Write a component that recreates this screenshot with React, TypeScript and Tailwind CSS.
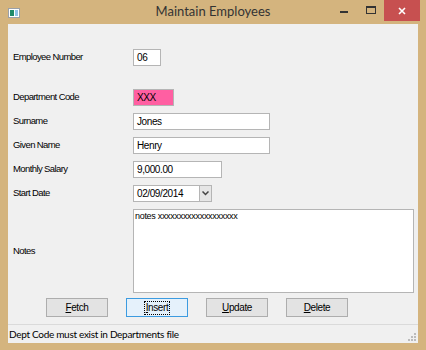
import React from 'react';

const label = 'w-[120px] shrink-0 text-[9.5px] tracking-[-0.6px] text-black';
const box = 'h-[17px] border border-[#b5b5b5] px-[3px] text-[10px] tracking-[-0.4px] leading-[15px] text-black';

function Row({ name, children, className = '' }: { name: string; children: React.ReactNode; className?: string }) {
  return (
    <div className={`flex items-center ${className}`}>
      <span className={label}>{name}</span>
      {children}
    </div>
  );
}

function Btn({ text, first, focused }: { text: string; first: string; focused?: boolean }) {
  return (
    <div
      className={`flex h-[19px] w-[62px] items-center justify-center border text-[10px] tracking-[-0.4px] text-black ${
        focused ? 'border-[#3c9be0] bg-[#e5f1fb]' : 'border-[#adadad] bg-[#e3e3e3]'
      }`}
    >
      <span className={focused ? 'outline outline-1 outline-dotted outline-black px-[1px] leading-[12px]' : ''}>
        <span className="underline">{first}</span>
        {text}
      </span>
    </div>
  );
}

export default function App() {
  return (
    <div className="flex h-[350px] w-[426px] flex-col bg-[#d4b47e] font-['Liberation_Sans',sans-serif]">
      {/* title bar */}
      <div className="relative flex h-[24px] shrink-0 items-center justify-center">
        <div className="absolute left-[8px] top-[8px] flex h-[10px] w-[12px] items-center border border-[#9aa0a8] bg-white px-[1px]">
          <div className="h-[6px] w-[5px] bg-[#1f8a6a]" />
          <div className="ml-[1px] h-[6px] w-[3px] bg-[#8fc3e8]" />
        </div>
        <span className="font-['Lato',sans-serif] text-[13px] text-[#333]">Maintain Employees</span>
        <div className="absolute right-[6px] top-0 flex h-[21px] items-start">
          <div className="flex h-[21px] w-[26px] items-center justify-center">
            <div className="mt-[3px] h-[2px] w-[8px] bg-[#333]" />
          </div>
          <div className="flex h-[21px] w-[27px] items-center justify-center">
            <div className="mb-[2px] h-[8px] w-[10px] border border-t-2 border-[#333]" />
          </div>
          <div className="flex h-[21px] w-[36px] items-center justify-center bg-[#c75050]">
            <svg width="8" height="8" viewBox="0 0 8 8">
              <path d="M1 1L7 7M7 1L1 7" stroke="white" strokeWidth="1.6" />
            </svg>
          </div>
        </div>
      </div>

      {/* client area */}
      <div className="mx-[8px] flex flex-1 flex-col bg-[#f0f0f0] pl-[5px]">
        <Row name="Employee Number" className="mt-[25px]">
          <div className={`${box} w-[28px] bg-white`}>06</div>
        </Row>
        <Row name="Department Code" className="mt-[23px]">
          <div className={`${box} w-[41px] bg-[#ff5fa2]`}>XXX</div>
        </Row>
        <Row name="Surname" className="mt-[7px]">
          <div className={`${box} w-[137px] bg-white`}>Jones</div>
        </Row>
        <Row name="Given Name" className="mt-[7px]">
          <div className={`${box} w-[137px] bg-white`}>Henry</div>
        </Row>
        <Row name="Monthly Salary" className="mt-[7px]">
          <div className={`${box} w-[89px] bg-white`}>9,000.00</div>
        </Row>
        <Row name="Start Date" className="mt-[7px]">
          <div className="flex h-[17px] w-[79px] border border-[#b5b5b5] bg-white">
            <span className="flex-1 px-[3px] text-[10px] leading-[15px] tracking-[-0.4px] text-black">02/09/2014</span>
            <div className="flex w-[12px] items-center justify-center border-l border-[#b5b5b5] bg-[#e6e6e6]">
              <svg width="7" height="5" viewBox="0 0 7 5">
                <path d="M0.5 0.5L3.5 3.5L6.5 0.5" stroke="#444" strokeWidth="1.5" fill="none" />
              </svg>
            </div>
          </div>
        </Row>
        <Row name="Notes" className="mt-[7px]">
          <div className="h-[84px] w-[281px] border border-[#b5b5b5] bg-white px-[1px] text-[9px] leading-[12px] tracking-[-0.3px] text-black">
            notes xxxxxxxxxxxxxxxxxxx
          </div>
        </Row>
        <div className="mt-[5px] flex gap-[18px] pl-[33px]">
          <Btn first="F" text="etch" />
          <Btn first="I" text="nsert" focused />
          <Btn first="U" text="pdate" />
          <Btn first="D" text="elete" />
        </div>
        <div className="-ml-[5px] mt-[7px] flex flex-1 items-center justify-between border-t border-[#dadada] pl-[1px] pr-[2px]">
          <span className="font-['Lato',sans-serif] text-[10px] tracking-[-0.3px] text-black">Dept Code must exist in Departments file</span>
          <svg width="8" height="8" viewBox="0 0 8 8" className="mt-[8px] self-end mb-[2px]">
            <rect x="6" y="0" width="2" height="2" fill="#bbb" />
            <rect x="3" y="3" width="2" height="2" fill="#bbb" />
            <rect x="6" y="3" width="2" height="2" fill="#bbb" />
            <rect x="0" y="6" width="2" height="2" fill="#bbb" />
            <rect x="3" y="6" width="2" height="2" fill="#bbb" />
            <rect x="6" y="6" width="2" height="2" fill="#bbb" />
          </svg>
        </div>
      </div>
      <div className="h-[8px] shrink-0" />
    </div>
  );
}
